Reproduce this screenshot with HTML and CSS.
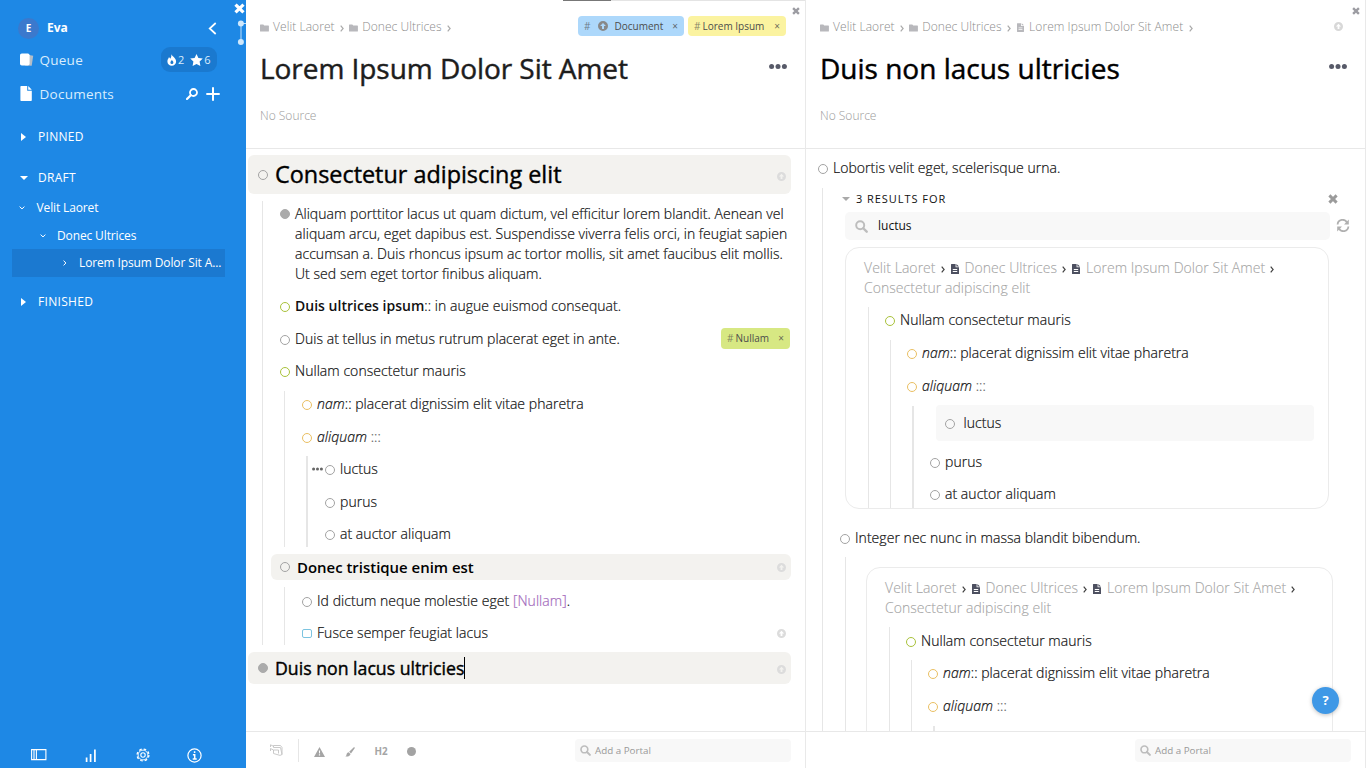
FILE: index.html
```
<!DOCTYPE html>
<html lang="en">
<head>
<meta charset="utf-8">
<title>Lorem Ipsum Dolor Sit Amet</title>
<link rel="stylesheet" href="styles.css">
</head>
<body>
<svg class="defs" width="0" height="0" aria-hidden="true">
  <symbol id="cross" viewBox="0 0 10 10"><path d="M2.4 2.4l5.2 5.2M7.6 2.4L2.4 7.6" stroke="currentColor" stroke-width="2.9" stroke-linecap="square" fill="none"/></symbol>
  <symbol id="folder" viewBox="0 0 10 8"><path d="M.5 0h3.2l1 1.2h4.6a.6.6 0 0 1 .6.6v5.4a.6.6 0 0 1-.6.6H.6a.6.6 0 0 1-.6-.6V.6A.6.6 0 0 1 .5 0z" fill="currentColor"/></symbol>
  <symbol id="file" viewBox="0 0 8 10"><path d="M.5 0H4.600v3.200H8v6.300a.5.5 0 0 1-.5.5h-7a.5.5 0 0 1-.5-.5v-9A.5.5 0 0 1 .5 0zM5.400 0L8 2.500H5.400zM1.800 5v.9h4.400V5zm0 2v.9h4.400V7z" fill="currentColor" fill-rule="evenodd"/></symbol>
  <symbol id="chev" viewBox="0 0 4 7"><path d="M.7.700l2.400 2.800L.7 6.300" stroke="currentColor" stroke-width="1.200" fill="none"/></symbol>
  <symbol id="up" viewBox="0 0 10 10"><path fill-rule="evenodd" fill="currentColor" d="M5 0a5 5 0 1 0 0 10A5 5 0 0 0 5 0zM5 1.900l2.900 3H6v3H4v-3H2.100z"/></symbol>
  <symbol id="dots" viewBox="0 0 18 5"><g fill="currentColor"><circle cx="2.600" cy="2.500" r="2.500"/><circle cx="9" cy="2.500" r="2.500"/><circle cx="15.400" cy="2.500" r="2.500"/></g></symbol>
  <symbol id="search" viewBox="0 0 12 12"><circle cx="4.800" cy="4.800" r="3.700" fill="none" stroke="currentColor" stroke-width="1.800"/><path d="M7.600 7.600l3.200 3.200" stroke="currentColor" stroke-width="2.200" stroke-linecap="round"/></symbol>
</svg>
<div class="app">
  <nav class="sidebar">
    <div class="user"><span class="avatar">E</span><b>Eva</b>
      <svg class="back" width="9" height="13" viewBox="0 0 9 13"><path d="M7.700 1L1.700 6.500l6 5.500" fill="none" stroke="#fff" stroke-width="1.700"/></svg></div>
    <div class="nav-row">
      <svg width="14" height="14" viewBox="0 0 14 14"><path d="M9 2l4.200.7-1.500 10L5 12.600z" fill="#b5bec8"/><rect x="0" y=".5" width="9.600" height="12" rx="1.800" fill="#fff"/></svg>
      <span>Queue</span>
      <div class="counts">
        <svg width="10" height="12" viewBox="0 0 10 12"><path fill="#fff" fill-rule="evenodd" d="M4.200 0c.4 2 4.900 3.600 4.900 7.400a4.300 4.300 0 0 1-8.700 0C.4 5.300 1.600 4.500 1.900 3.200c.8.300 1.200 1 1.300 1.600C4.200 3.700 4.600 2 4.200 0zM4.800 5.800c0 1.200-1.400 1.400-1.400 2.700a1.500 1.500 0 0 0 3 0c0-1.100-1.100-1.600-1.600-2.700z"/></svg>
        <span>2</span>
        <svg class="star" width="13" height="12" viewBox="0 0 13 12"><path fill="#fff" d="M6.500 0l1.900 3.900 4.400.6-3.200 3.100.8 4.400-3.900-2.100L2.600 12l.8-4.400L.2 4.500l4.400-.6z"/></svg>
        <span>6</span>
      </div>
    </div>
    <div class="nav-row docs">
      <svg width="14" height="15" viewBox="0 0 14 15"><path d="M1.200 0h6v4.800h4.600v9.400a.8.800 0 0 1-.8.800H1.200a.8.800 0 0 1-.8-.8V.800a.8.800 0 0 1 .8-.8zM8.200 0l3.600 3.800H8.200z" fill="#fff"/></svg>
      <span>Documents</span>
      <svg class="find" width="12" height="12" viewBox="0 0 12 12"><circle cx="7.500" cy="4.500" r="3.500" fill="none" stroke="#fff" stroke-width="1.800"/><path d="M4.800 7.200L1 11" stroke="#fff" stroke-width="2.200" stroke-linecap="round"/></svg>
      <svg width="14" height="14" viewBox="0 0 14 14"><path d="M7 .3v13.400M.3 7h13.400" stroke="#fff" stroke-width="2"/></svg>
    </div>
    <div class="section pinned"><i class="tri"></i>PINNED</div>
    <div class="section draft"><i class="tri open"></i>DRAFT</div>
    <div class="tree t1"><svg width="6" height="4" viewBox="0 0 6 4"><path d="M.6.600L3 2.900 5.400.6" stroke="#fff" fill="none"/></svg>Velit Laoret</div>
    <div class="tree t2"><svg width="6" height="4" viewBox="0 0 6 4"><path d="M.6.600L3 2.900 5.400.6" stroke="#fff" fill="none"/></svg>Donec Ultrices</div>
    <div class="tree t3"><svg width="4" height="6" viewBox="0 0 4 6"><path d="M.6.600L2.900 3 .6 5.400" stroke="#fff" fill="none"/></svg>Lorem Ipsum Dolor Sit A...</div>
    <div class="section finished"><i class="tri"></i>FINISHED</div>
    <div class="tools">
      <svg width="16" height="12" viewBox="0 0 16 12"><path d="M.6.600h14.300v10H.6zM5.400.6v10M3 .6v10" fill="none" stroke="#fff" stroke-width="1.100"/></svg>
      <svg width="12" height="13" viewBox="0 0 12 13"><path d="M1.600 13V8.500M5.600 13V5M9.900 13V.5" stroke="#fff" stroke-width="1.700"/></svg>
      <svg width="14" height="14" viewBox="0 0 14 14"><circle cx="7" cy="7" r="5.900" fill="none" stroke="#fff" stroke-width="1.300" stroke-dasharray="2.600 2.034"/><circle cx="7" cy="7" r="4.900" fill="none" stroke="#fff" stroke-width=".9"/><circle cx="7" cy="7" r="2.200" fill="none" stroke="#fff" stroke-width="1.100"/></svg>
      <svg width="15" height="15" viewBox="0 0 15 15"><circle cx="7.500" cy="7.500" r="6.600" fill="none" stroke="#fff" stroke-width="1.200"/><path d="M7.600 3.200v1.800M5.900 6.700h1.800v4.300M5.700 11h4" stroke="#fff" stroke-width="1.500" fill="none"/></svg>
    </div>
    <svg class="side-close" width="11" height="11"><use href="#cross"/></svg>
    <svg class="link" width="10" height="26" viewBox="0 0 10 26"><path d="M5 4v18M5 3.500h5" stroke="#bfe0fb"/><circle cx="4.900" cy="3.500" r="3" fill="#cfe8fc"/><circle cx="4.900" cy="22" r="3" fill="#cfe8fc"/></svg>
  </nav>

  <main class="pane">
    <div class="progress"></div>
    <svg class="pane-close" width="8" height="8"><use href="#cross"/></svg>
    <header>
      <div class="crumbs">
        <svg width="9" height="8"><use href="#folder"/></svg><span>Velit Laoret</span><svg class="sep" width="4" height="7"><use href="#chev"/></svg>
        <svg width="9" height="8"><use href="#folder"/></svg><span>Donec Ultrices</span><svg class="sep" width="4" height="7"><use href="#chev"/></svg>
        <div class="tags">
          <span class="tag blue"><i>#</i><svg width="10" height="10"><use href="#up"/></svg><span>Document</span><em>×</em></span>
          <span class="tag yellow"><i>#</i><span>Lorem Ipsum</span><em>×</em></span>
        </div>
      </div>
      <div class="title"><h1>Lorem Ipsum Dolor Sit Amet</h1><svg width="18" height="5"><use href="#dots"/></svg></div>
      <div class="source">No Source</div>
    </header>
    <section class="body">
      <div class="heading big"><i class="dot"></i><h2>Consectetur adipiscing elit</h2><svg class="badge" width="9" height="9"><use href="#up"/></svg></div>
      <div class="kids k0">
        <div class="row"><i class="dot full"></i><p>Aliquam porttitor lacus ut quam dictum, vel efficitur lorem blandit. Aenean vel<br>aliquam arcu, eget dapibus est. Suspendisse viverra felis orci, in feugiat sapien<br>accumsan a. Duis rhoncus ipsum ac tortor mollis, sit amet faucibus elit mollis.<br>Ut sed sem eget tortor finibus aliquam.</p></div>
        <div class="row"><i class="dot green"></i><p><b>Duis ultrices ipsum</b>:: in augue euismod consequat.</p></div>
        <div class="row"><i class="dot"></i><p>Duis at tellus in metus rutrum placerat eget in ante.</p><span class="tag lime"><i>#</i><span>Nullam</span><em>×</em></span></div>
        <div class="row"><i class="dot green"></i><p>Nullam consectetur mauris</p></div>
        <div class="kids">
          <div class="row"><i class="dot amber"></i><p><em>nam</em>:: placerat dignissim elit vitae pharetra</p></div>
          <div class="row"><i class="dot amber"></i><p><em>aliquam</em> <span class="colons">:::</span></p></div>
          <div class="kids thick">
            <div class="row"><svg class="handle" width="11" height="4"><use href="#dots"/></svg><i class="dot"></i><p>luctus</p></div>
            <div class="row"><i class="dot"></i><p>purus</p></div>
            <div class="row"><i class="dot"></i><p>at auctor aliquam</p></div>
          </div>
        </div>
        <div class="heading small"><i class="dot"></i><h4>Donec tristique enim est</h4><svg class="badge" width="9" height="9"><use href="#up"/></svg></div>
        <div class="kids">
          <div class="row"><i class="dot"></i><p>Id dictum neque molestie eget <span class="ref">[Nullam]</span>.</p></div>
          <div class="row"><i class="dot todo"></i><p>Fusce semper feugiat lacus</p><svg class="badge" width="9" height="9"><use href="#up"/></svg></div>
        </div>
      </div>
      <div class="heading mid"><i class="dot full"></i><h3>Duis non lacus ultricies</h3><i class="caret"></i><svg class="badge" width="9" height="9"><use href="#up"/></svg></div>
    </section>
    <footer>
      <svg class="portal" width="13" height="12" viewBox="0 0 13 12"><path d="M.5 3V.8L4 2.500M3.500 3.500v-2h7l1.500 2v7l-2 .9-6.500-1.900V6M3.500 3.500h7l1.500 7M.5 7V4.500l3 1.500h5V9.500" fill="none" stroke="#c4c4c4" stroke-width=".9"/></svg>
      <i class="rule"></i>
      <svg class="warn" width="11" height="10" viewBox="0 0 11 10"><path fill="#a5a5a5" fill-rule="evenodd" d="M5.500 0L11 10H0zM4.900 3.600l.2 3h.8l.2-3zM4.900 7.300v1.200h1.200V7.300z"/></svg>
      <svg class="brush" width="10" height="10" viewBox="0 0 10 10"><path d="M8.800.3c.8-.5 1.300.2.900.9L6 6.400 4.200 4.800zM3.600 5.300l1.900 1.700C5.300 8.800 3.500 9.900.3 9.500c1.200-.6 1-1.300 1.300-2.300.3-.9 1-1.600 2-1.900z" fill="#a5a5a5"/></svg>
      <b>H2</b>
      <i class="disc"></i>
      <div class="add"><svg width="11" height="11"><use href="#search"/></svg><span>Add a Portal</span></div>
    </footer>
  </main>

  <aside class="pane right">
    <svg class="pane-close" width="8" height="8"><use href="#cross"/></svg>
    <header>
      <div class="crumbs">
        <svg width="9" height="8"><use href="#folder"/></svg><span>Velit Laoret</span><svg class="sep" width="4" height="7"><use href="#chev"/></svg>
        <svg width="9" height="8"><use href="#folder"/></svg><span>Donec Ultrices</span><svg class="sep" width="4" height="7"><use href="#chev"/></svg>
        <svg class="doc" width="7" height="9"><use href="#file"/></svg><span>Lorem Ipsum Dolor Sit Amet</span><svg class="sep" width="4" height="7"><use href="#chev"/></svg>
        <svg class="badge" width="9" height="9"><use href="#up"/></svg>
      </div>
      <div class="title"><h1>Duis non lacus ultricies</h1><svg width="18" height="5"><use href="#dots"/></svg></div>
      <div class="source">No Source</div>
    </header>
    <section class="body">
      <div class="row top"><i class="dot"></i><p>Lobortis velit eget, scelerisque urna.</p></div>
      <div class="kids outer">
        <div class="results"><i class="fold"></i><span>3 RESULTS FOR</span><svg width="10" height="10"><use href="#cross"/></svg></div>
        <div class="query"><div class="field"><svg width="13" height="13"><use href="#search"/></svg>luctus</div>
          <svg width="14" height="13" viewBox="0 0 14 13"><path d="M1.600 5.500A5 5 0 0 1 11 3.500M12.400 7.500A5 5 0 0 1 3 9.500" fill="none" stroke="#b0b0b0" stroke-width="1.800"/><path d="M12.800.5v5H8zM1.200 12.500v-5H6z" fill="#b0b0b0"/></svg></div>
        <div class="card first">
          <div class="path"><span>Velit Laoret</span><svg class="sep" width="4" height="7"><use href="#chev"/></svg><svg width="8" height="10"><use href="#file"/></svg><span>Donec Ultrices</span><svg class="sep" width="4" height="7"><use href="#chev"/></svg><svg width="8" height="10"><use href="#file"/></svg><span>Lorem Ipsum Dolor Sit Amet</span><svg class="sep" width="4" height="7"><use href="#chev"/></svg></div>
          <div class="path">Consectetur adipiscing elit</div>
          <div class="kids">
            <div class="row"><i class="dot green"></i><p>Nullam consectetur mauris</p></div>
            <div class="kids">
              <div class="row"><i class="dot amber"></i><p><em>nam</em>:: placerat dignissim elit vitae pharetra</p></div>
              <div class="row"><i class="dot amber"></i><p><em>aliquam</em> <span class="colons">:::</span></p></div>
              <div class="kids thick">
                <div class="hit"><i class="dot"></i><p>luctus</p></div>
                <div class="row"><i class="dot"></i><p>purus</p></div>
                <div class="row"><i class="dot"></i><p>at auctor aliquam</p></div>
              </div>
            </div>
          </div>
        </div>
        <div class="row integer"><i class="dot"></i><p>Integer nec nunc in massa blandit bibendum.</p></div>
        <div class="kids second">
          <div class="card">
            <div class="path"><span>Velit Laoret</span><svg class="sep" width="4" height="7"><use href="#chev"/></svg><svg width="8" height="10"><use href="#file"/></svg><span>Donec Ultrices</span><svg class="sep" width="4" height="7"><use href="#chev"/></svg><svg width="8" height="10"><use href="#file"/></svg><span>Lorem Ipsum Dolor Sit Amet</span><svg class="sep" width="4" height="7"><use href="#chev"/></svg></div>
            <div class="path">Consectetur adipiscing elit</div>
            <div class="kids">
              <div class="row"><i class="dot green"></i><p>Nullam consectetur mauris</p></div>
              <div class="kids">
                <div class="row"><i class="dot amber"></i><p><em>nam</em>:: placerat dignissim elit vitae pharetra</p></div>
                <div class="row"><i class="dot amber"></i><p><em>aliquam</em> <span class="colons">:::</span></p></div>
                <div class="kids thick stub"></div>
              </div>
            </div>
          </div>
        </div>
      </div>
    </section>
    <footer><div class="add"><svg width="11" height="11"><use href="#search"/></svg><span>Add a Portal</span></div></footer>
  </aside>
  <div class="help">?</div>
</div>
</body>
</html>
```
FILE: styles.css
```
* { box-sizing: border-box; }
body { margin: 0; font: 300 14px/20px "Open Sans", sans-serif; color: #111; overflow: hidden; }
p, h1, h2, h3, h4 { margin: 0; white-space: nowrap; }
svg { flex: none; display: block; }
.defs { position: absolute; }
.app { display: grid; grid-template-columns: 246px 560px 560px; width: 1366px; height: 768px; position: relative; }

/* Sidebar */
.sidebar { background: #1e88e5; color: #fff; position: relative; display: flex; flex-direction: column; padding-top: 17px; font-weight: 400; }
.user { display: flex; align-items: center; height: 22px; padding: 0 29px 0 18px; font-size: 12.5px; }
.user b { margin-left: 8px; font-size: 12px; }
.avatar { width: 21px; height: 21px; border-radius: 50%; background: #3b79cd; font: 700 10px/21px "Open Sans", sans-serif; text-align: center; }
.back { margin-left: auto; }
.nav-row { display: flex; align-items: center; height: 27px; margin-top: 7px; padding: 0 26px 0 20px; font-size: 13.5px; letter-spacing: .25px; color: #d9edfd; }
.nav-row > span { margin-left: 5.5px; }
.docs { margin-top: 7px; }
.docs > span { margin-right: auto; }
.docs .find { margin-right: 8px; }
.counts { margin-left: auto; margin-right: 3px; display: flex; align-items: center; width: 56px; height: 25px; border-radius: 9px; background: #1a79cf; padding-left: 6px; font-size: 11px; letter-spacing: 0; }
.counts span { margin-left: 1px; }
.counts .star { margin-left: 6px; }
.section { display: flex; align-items: center; height: 20px; padding-left: 21px; font-size: 12px; letter-spacing: .3px; }
.pinned { margin-top: 20px; }
.draft { margin-top: 21px; margin-bottom: 6px; }
.finished { margin-top: 15px; }
.tri { width: 17px; flex: none; }
.tri::before { content: ""; display: block; width: 0; border: 4px solid transparent; border-left: 5px solid #fff; border-right: 0; }
.tri.open::before { border: 4px solid transparent; border-top: 4px solid #fff; border-bottom: 0; margin-left: -1px; }
.tree { display: flex; align-items: center; height: 28px; font-size: 12px; letter-spacing: -.13px; white-space: nowrap; }
.t1 { padding-left: 19px; gap: 11.500px; }
.t2 { padding-left: 40px; gap: 11px; height: 27px; }
.t3 { margin: 0 21px 0 12px; padding-left: 51px; gap: 12px; background: #1b79d0; }
.tools { margin-top: auto; display: grid; grid-template-columns: repeat(4, 52px); justify-items: center; align-items: center; height: 26px; padding-left: 12.500px; }
.side-close { position: absolute; left: 234px; top: 3px; }
.link { position: absolute; left: 236px; top: 20px; }

/* Panes */
.pane { position: relative; display: flex; flex-direction: column; height: 768px; min-height: 0; border-right: 1px solid #e9e9e9; background: #fff; }
.progress { position: absolute; left: 317px; right: 0; top: 0; height: 1px; background: linear-gradient(90deg, #777 48px, #e4e4e4 48px); }
.pane-close { position: absolute; right: 5px; top: 7px; color: #9c9ca2; }
header { height: 149px; flex: none; border-bottom: 1px solid #e8e8e8; padding: 15px 18px 0 14px; }
.crumbs { display: flex; align-items: center; height: 22px; font-size: 12px; letter-spacing: .06px; color: #8c8c8c; white-space: nowrap; }
.crumbs > svg { color: #b8b8bc; margin-top: 3px; }
.crumbs > span { margin-left: 4px; margin-top: 2px; }
.crumbs > .sep { margin: 4px 5px 0 5.500px; color: #aaa; }
.crumbs .doc { margin-left: 1px; margin-right: 1px; }
.crumbs > .badge { margin: 0 4px 0 auto; color: #d8d8d8; }
.tags { margin-left: auto; margin-right: 1px; display: flex; gap: 4px; letter-spacing: 0; }
.tag { display: flex; align-items: center; height: 20px; border-radius: 4px; font: 400 10px/20px "Open Sans", sans-serif; color: #4c4c4c; padding: 0 6px; letter-spacing: 0; }
.tag i { font-style: normal; opacity: .65; margin-right: 2px; }
.tag em { font-style: normal; margin-left: auto; opacity: .8; font-size: 10px; }
.blue { background: #add8fb; width: 106px; }
.blue svg { color: #888; margin: 0 6px 0 6px; }
.yellow { background: #fbf3a0; width: 98px; }
.lime { background: #d7e883; width: 69px; margin-left: auto; height: 21px; }
.title { display: flex; align-items: center; justify-content: space-between; height: 40px; margin-top: 11px; }
.title svg { color: #575a68; margin-top: -4px; }
h1 { font: 400 28px/40px "Open Sans", sans-serif; -webkit-text-stroke: .45px; color: #1d1d1d; letter-spacing: -.05px; }
.right h1 { color: #000; letter-spacing: 0; }
.source { font-size: 12px; color: #9a9a9a; margin-top: 18px; }
.body { flex: 1; min-height: 0; overflow: hidden; }

/* Outline */
.row, .hit { display: flex; align-items: flex-start; padding: 6.300px 1px 6.300px 18px; }
.row p, .hit p { -webkit-text-stroke: .2px; letter-spacing: .045px; }
.row b { font-weight: 600; -webkit-text-stroke: 0; letter-spacing: .02px; }
.dot { width: 10px; height: 10px; flex: none; border: 1px solid #a3a3a3; border-radius: 50%; margin: 6px 5px 0 0; }
.dot.full { background: #ababab; border-color: #ababab; margin-top: 5px; }
.dot.green { border-color: #a9c23a; }
.dot.amber { border-color: #eabf62; }
.dot.todo { border-color: #7cc4e0; border-radius: 2px; height: 9px; margin-top: 6px; }
.kids { margin-left: 22px; background: linear-gradient(#e6e6e6, #e6e6e6) 0 3px / 1px calc(100% - 7px) no-repeat; }
.kids.thick { background-size: 2px calc(100% - 7px); }
.k0 { margin-left: 16px; margin-right: 14px; padding-top: 3.300px; margin-bottom: 2.400px; background-position: 0 7px; background-size: 1px calc(100% - 11px); }
.k0 .thick .row { padding-left: 19px; position: relative; }
.handle { position: absolute; left: 6px; top: 14px; color: #666; }
.row .lime { margin-top: -1px; margin-bottom: -1px; }
.colons { color: #666; }
.ref { color: #a46cbd; }
.heading { display: flex; align-items: center; background: #f3f2ef; border-radius: 6px; color: #000; margin-right: 14px; }
.heading .dot { margin: 0 7px 0 0; }
.badge { color: #dcdcdc; }
.heading .badge { margin-left: auto; margin-right: 5px; margin-top: 4px; }
.row .badge { margin: 6px 4px 0 auto; }
.big { height: 39px; margin: 6px 14px 0 2px; padding-left: 10px; }
h2 { font: 400 23.400px/39px "Open Sans", sans-serif; -webkit-text-stroke: .4px; }
h3 { font: 400 17.700px/32px "Open Sans", sans-serif; -webkit-text-stroke: .4px; }
h4 { font: 600 14.950px/26px "Open Sans", sans-serif; }
.small { height: 26.600px; margin: 3px 0 4px 9px; padding-left: 9px; }
.mid { height: 32px; margin-left: 2px; padding-left: 10px; }
.caret { width: 1px; height: 22px; background: #000; }
.small .badge { margin-top: 1px; }

/* Footer */
footer { height: 37px; flex: none; border-top: 1px solid #e8e8e8; display: flex; align-items: center; padding: 0 14px 0 24px; font-size: 10px; }
.portal { margin-top: -1px; }
.rule { width: 1px; height: 23px; background: #e6e6e6; margin-left: 15px; }
.warn { margin-left: 15px; margin-top: 3px; }
.brush { margin-left: 20px; margin-top: 3px; }
footer b { font: 700 9.800px/12px "Open Sans", sans-serif; color: #a5a5a5; margin: 3px 0 0 19.500px; }
.disc { width: 9px; height: 9px; border-radius: 50%; background: #a3a3a3; margin: 3px 0 0 19px; }
.add { width: 216px; height: 23px; margin-left: auto; background: #f8f8f8; border-radius: 4px; display: flex; align-items: center; gap: 4px; padding-left: 5px; color: #999; font: 400 9.800px/22px "Open Sans", sans-serif; }
.add svg { color: #bdbdbd; }
.add span { margin-top: 2px; }

/* Right pane */
.top { padding: 9px 0 6.600px 12px; }
.top .dot, .integer .dot { margin-top: 6px; }
.outer { margin-left: 16px; background-position: 0 3px; background-size: 1px 100%; }
.results { display: flex; align-items: center; height: 27px; padding: 1px 27px 0 20px; font: 400 11px/20px "Open Sans", sans-serif; letter-spacing: .95px; }
.results svg { margin-left: auto; color: #9b9b9b; }
.fold { border: 4px solid transparent; border-top-color: #a9a9a9; border-bottom: 0; margin-right: 6px; }
.query { display: flex; align-items: center; padding-left: 23px; height: 28px; gap: 6px; }
.field { width: 485px; height: 28px; background: #f8f8f8; border-radius: 5px; display: flex; align-items: center; gap: 10px; padding: 1px 0 0 10px; font-size: 12px; font-weight: 400; }
.field svg { color: #bdbdbd; }
.card { border: 1px solid #ebebeb; border-radius: 14px; padding: 10px 14px 0 18px; overflow: hidden; }
.first { margin: 7px 0 0 23px; width: 484px; height: 262px; }
.path { display: flex; align-items: center; height: 20px; color: #a5a5a5; white-space: nowrap; -webkit-text-stroke: .1px; letter-spacing: .045px; }
.path svg { color: #4d5060; margin: 2px 5.500px 0 0; }
.path .sep { color: #444; margin: 3px 6.500px 0 5px; }
.card .kids .row { padding-left: 17px; }
.card .kids .thick .row { padding-left: 18px; }
.card > .kids { margin-left: 4px; padding-top: 5.500px; margin-top: 1px; margin-right: -14px; background-size: 1px 100%; background-position: 0 8px; }
.card .kids .kids { background-size: 1px 100%; }
.card .kids .thick { background-size: 2px 100%; background-position: 0 4px; padding-top: .500px; }
.hit { background: #f8f8f8; border-radius: 4px; margin: 3px 14px 4px 24px; padding: 8px 9px; height: 36px; }
.card .thick .hit .dot { margin-right: 8.500px; }
.integer { padding: 19px 0 6.600px 18px; }
.second { margin-left: 23px; padding: 12.600px 0 0 21px; height: 200px; }
.second .card { width: 467px; height: 300px; }
.stub { height: 60px; }
.help { position: absolute; left: 1312px; top: 687px; width: 27px; height: 27px; border-radius: 50%; background: #3f98e6; color: #fff; font: 700 13px/27px "Open Sans", sans-serif; text-align: center; box-shadow: 0 1px 4px rgba(0,0,0,.25); }
```
